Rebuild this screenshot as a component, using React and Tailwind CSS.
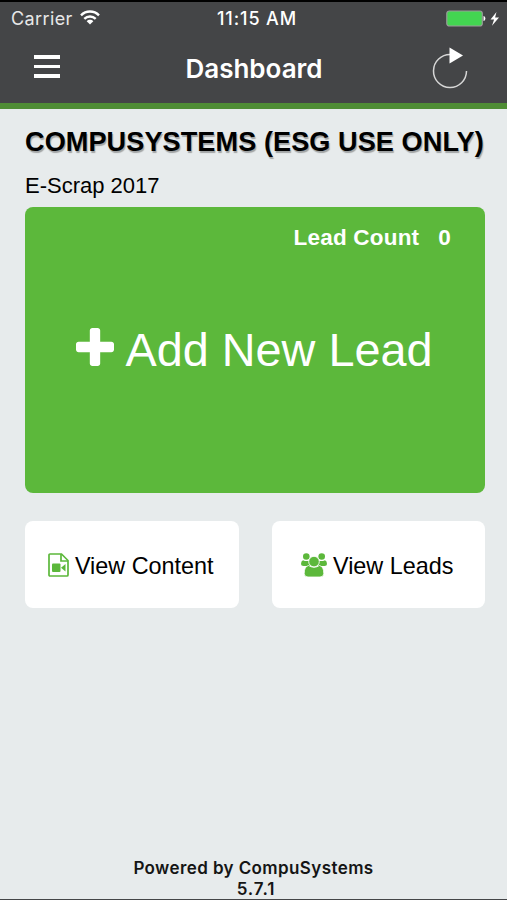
import React from 'react';

function StatusBar() {
  return (
    <div className="grid h-[33px] grid-cols-3 items-center font-['Inter',sans-serif] text-[18px] leading-none text-white">
      <div className="flex items-center gap-[7px] pl-[11px] text-[#e8e8e8]">
        <span className="tracking-[0.4px]">Carrier</span>
        <svg className="-mt-[3px] h-[15px] w-[20px]" viewBox="0 0 20 15" fill="none" stroke="#fff" strokeWidth="2.4">
          <path d="M1 5.300C6 .3 14 .3 19 5.300" />
          <path d="M4.300 8.800C7.500 5.700 12.500 5.700 15.700 8.800" />
          <path d="M10 14.500L6.700 11.200C8.500 9.400 11.500 9.400 13.300 11.200Z" fill="#fff" stroke="none" />
        </svg>
      </div>
      <span className="whitespace-nowrap pl-[7px] text-center font-medium tracking-[0.9px]">11:15 AM</span>
      <div className="flex items-center justify-end pr-[7px]">
        <svg className="-mt-px h-[17px] w-[54px]" viewBox="0 0 54 17">
          <rect x=".8" y="1" width="35.500" height="15" rx="2.500" fill="#43d551" stroke="#9b9b9b" strokeWidth="1.200" />
          <path d="M37.500 6v5c2.500-.5 2.500-4.500 0-5z" fill="#fff" />
          <path d="M50.500 2L44.500 9.500h3.600L46 15.700l7-8.200h-3.900z" fill="#fff" />
        </svg>
      </div>
    </div>
  );
}

function NavBar() {
  return (
    <div className="flex h-[68px] items-center justify-between pl-[34px] pr-[39px]">
      <div className="flex w-[42px] flex-col gap-[6px] pb-[5px]">
        <span className="h-[3.500px] w-[26px] bg-white" />
        <span className="h-[3.500px] w-[26px] bg-white" />
        <span className="h-[3.500px] w-[26px] bg-white" />
      </div>
      <h1 className="font-['Inter',sans-serif] text-[26px] font-semibold leading-none text-white">Dashboard</h1>
      <svg className="-mt-[5px] h-[44px] w-[36px]" viewBox="0 0 36 44" fill="none">
        <path d="M18.500 9.500A16.500 16.500 0 1 0 34.500 26" stroke="#d6d6d6" strokeWidth="1.500" />
        <path d="M17.500 2.500L31 10.500L17.500 18.500Z" fill="#fff" />
      </svg>
    </div>
  );
}

function PlusIcon() {
  return (
    <svg className="-mt-[6px] h-[38px] w-[38px] shrink-0" viewBox="0 0 1408 1408" fill="currentColor">
      <path d="M1408 608v192q0 40-28 68t-68 28h-416v416q0 40-28 68t-68 28h-192q-40 0-68-28t-28-68v-416h-416q-40 0-68-28t-28-68v-192q0-40 28-68t68-28h416v-416q0-40 28-68t68-28h192q40 0 68 28t28 68v416h416q40 0 68 28t28 68z" />
    </svg>
  );
}

function VideoFileIcon() {
  return (
    <svg className="h-[24px] w-[21px] shrink-0" viewBox="0 0 21 24" fill="none" stroke="#5cb83b" strokeWidth="1.7">
      <path d="M2 1h11.500L20 7.500V22q0 1-1 1H2q-1 0-1-1V2q0-1 1-1z" />
      <path d="M13 1v7h7" />
      <rect x="4" y="10.500" width="8.500" height="8.500" rx="1" fill="#5cb83b" stroke="none" />
      <path d="M17.500 11v7.500L13 14.800z" fill="#5cb83b" stroke="none" />
    </svg>
  );
}

function GroupIcon() {
  return (
    <svg className="h-[24px] w-[26px] shrink-0" viewBox="0 0 26 24" fill="#5cb83b">
      <circle cx="5.300" cy="3.500" r="3.300" />
      <circle cx="20.700" cy="3.500" r="3.300" />
      <path d="M2 7.200Q5.300 8.800 9 7.600V13H2.500Q0 13 0 11Q0 8 2 7.200z" />
      <path d="M24 7.200Q20.700 8.800 17 7.600V13H23.500Q26 13 26 11Q26 8 24 7.200z" />
      <path d="M7.500 12.500Q13 16 18.500 12.500Q22.800 13.500 22.800 20.500Q22.800 24 19 24H7Q3.200 24 3.200 20.500Q3.200 13.500 7.500 12.500z" stroke="#fff" strokeWidth=".8" />
      <circle cx="13" cy="8.600" r="5.300" stroke="#fff" strokeWidth=".9" />
    </svg>
  );
}

function ActionButton({ icon, children }) {
  return (
    <button className="flex h-[87px] items-center justify-center gap-[6px] rounded-[8px] bg-white pr-[2px] text-[23.400px] leading-none text-black">
      {icon}
      <span className="whitespace-nowrap pt-[4px]">{children}</span>
    </button>
  );
}

export default function App() {
  return (
    <div className="flex h-[900px] w-[507px] flex-col overflow-hidden border-b border-t-2 border-b-[#444547] border-t-black bg-[#e7ebec] font-['Liberation_Sans',Arial,sans-serif] text-black">
      <header className="h-[107px] shrink-0 border-b-[6px] border-[#4f8d35] bg-[#444547]">
        <StatusBar />
        <NavBar />
      </header>
      <main className="flex grow flex-col pl-[25px] pr-[22px] pt-[17px]">
        <h2 className="whitespace-nowrap text-[27.100px] font-bold leading-[32px] tracking-[0.08px] [text-shadow:1px_2px_1px_rgba(0,0,0,0.3)]">
          COMPUSYSTEMS (ESG USE ONLY)
        </h2>
        <p className="mt-[15px] text-[22px] leading-[26px]">E-Scrap 2017</p>
        <button className="mt-[8px] flex h-[286px] w-full flex-col rounded-[8px] bg-[#5cb83b] text-white">
          <span className="flex gap-[19px] self-end pr-[34px] pt-[18px] text-[22.500px] font-bold leading-[26px] tracking-[0.2px]">
            <span>Lead Count</span>
            <span>0</span>
          </span>
          <span className="mt-[71px] flex items-center gap-[12px] self-center pr-[2px] text-[46.800px] leading-[56px]">
            <PlusIcon />
            <span className="whitespace-nowrap">Add New Lead</span>
          </span>
        </button>
        <div className="mt-[28px] grid grid-cols-2 gap-[33px]">
          <ActionButton icon={<VideoFileIcon />}>View Content</ActionButton>
          <ActionButton icon={<GroupIcon />}>View Leads</ActionButton>
        </div>
      </main>
      <footer className="text-center font-['Inter',sans-serif] text-[17px] font-semibold leading-[20.500px] tracking-[0.400px] text-[#151515]">
        <p>Powered by CompuSystems</p>
        <p className="pl-[5px] tracking-[0.900px]">5.7.1</p>
      </footer>
    </div>
  );
}
